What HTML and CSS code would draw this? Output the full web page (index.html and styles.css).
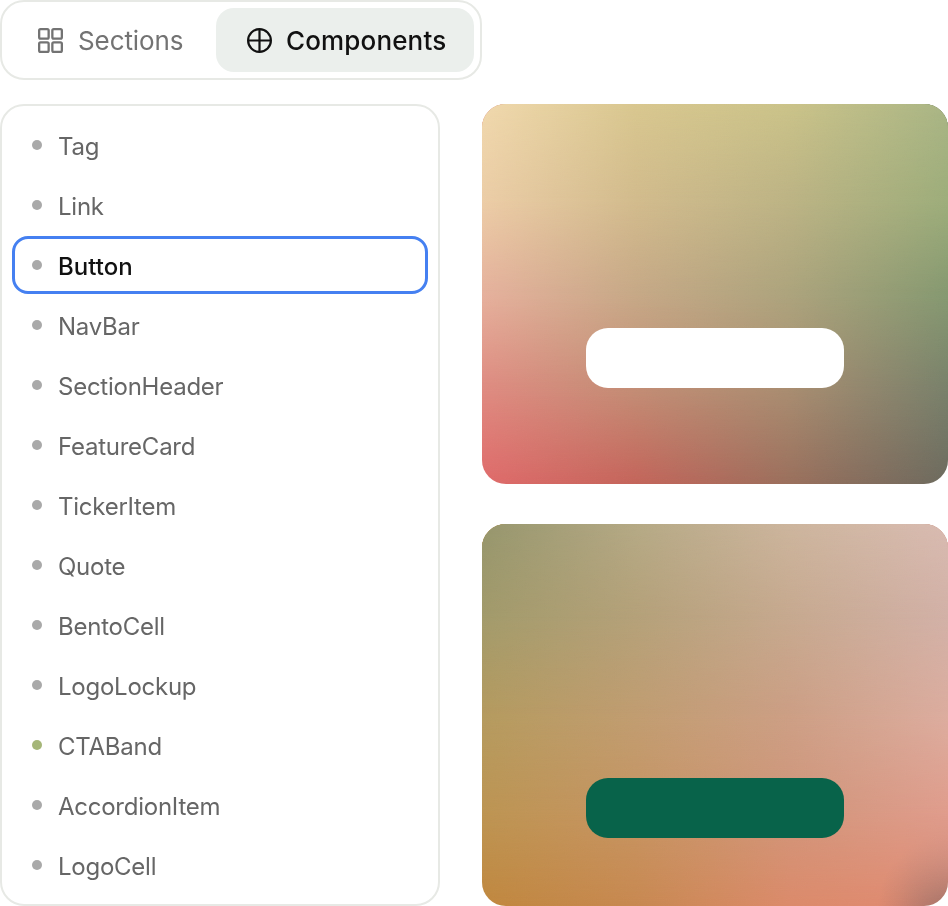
FILE: index.html
```html
<!DOCTYPE html>
<html lang="en">
<head>
<meta charset="utf-8">
<title>Components</title>
<link rel="stylesheet" href="styles.css">
</head>
<body>
<div class="page">
  <nav class="tabs">
    <button class="tab">
      <svg class="icon" viewBox="0 0 25 25" fill="none" stroke="currentColor" stroke-width="2.3"><rect x="1.15" y="1.15" width="9.5" height="9.5" rx="1.4"/><rect x="14.35" y="1.15" width="9.5" height="9.5" rx="1.4"/><rect x="1.15" y="14.35" width="9.5" height="9.5" rx="1.4"/><rect x="14.35" y="14.35" width="9.5" height="9.5" rx="1.4"/></svg>
      <span>Sections</span>
    </button>
    <button class="tab tab-active">
      <svg class="icon" viewBox="0 0 25 25" fill="none" stroke="currentColor" stroke-width="2.2"><circle cx="12.5" cy="12.5" r="11.4"/><path d="M12.5 1.1V23.9M1.1 12.5H23.9"/></svg>
      <span>Components</span>
    </button>
  </nav>
  <div class="main">
    <ul class="list">
      <li class="row"><i class="dot"></i><span class="label">Tag</span></li>
      <li class="row"><i class="dot"></i><span class="label">Link</span></li>
      <li class="row row-selected"><i class="dot"></i><span class="label">Button</span></li>
      <li class="row"><i class="dot"></i><span class="label">NavBar</span></li>
      <li class="row"><i class="dot"></i><span class="label">SectionHeader</span></li>
      <li class="row"><i class="dot"></i><span class="label">FeatureCard</span></li>
      <li class="row"><i class="dot"></i><span class="label">TickerItem</span></li>
      <li class="row"><i class="dot"></i><span class="label">Quote</span></li>
      <li class="row"><i class="dot"></i><span class="label">BentoCell</span></li>
      <li class="row"><i class="dot"></i><span class="label">LogoLockup</span></li>
      <li class="row"><i class="dot dot-green"></i><span class="label">CTABand</span></li>
      <li class="row"><i class="dot"></i><span class="label">AccordionItem</span></li>
      <li class="row"><i class="dot"></i><span class="label">LogoCell</span></li>
    </ul>
    <div class="previews">
      <section class="preview warm">
        <div class="band b4"></div><div class="band b3"></div><div class="band b2"></div><div class="band b1"></div>
        <svg class="grain" width="100%" height="100%"><filter id="grain-a"><feTurbulence type="fractalNoise" baseFrequency="0.9" numOctaves="2"/><feColorMatrix type="saturate" values="0"/></filter><rect width="100%" height="100%" filter="url(#grain-a)"/></svg>
        <div class="pill pill-white"></div>
      </section>
      <section class="preview earth">
        <div class="band b4"></div><div class="band b3"></div><div class="band b2"></div><div class="band b1"></div>
        <svg class="grain" width="100%" height="100%"><filter id="grain-b"><feTurbulence type="fractalNoise" baseFrequency="0.9" numOctaves="2"/><feColorMatrix type="saturate" values="0"/></filter><rect width="100%" height="100%" filter="url(#grain-b)"/></svg>
        <div class="pill pill-green"></div>
      </section>
    </div>
  </div>
</div>
</body>
</html>
```
FILE: styles.css
```css
* { box-sizing: border-box; }
html, body { margin: 0; padding: 0; background: #fff; }
body { font-family: Inter, "Liberation Sans", sans-serif; }
.page { display: flex; flex-direction: column; align-items: flex-start; gap: 24px; width: 948px; }

.tabs { display: flex; gap: 8px; width: 482px; height: 80px; padding: 6px; border: 2px solid #e7e9e5; border-radius: 24px; background: #fff; }
.tab { display: flex; align-items: center; gap: 15px; height: 64px; border: 0; border-radius: 18px; background: transparent; font: inherit; font-size: 26px; letter-spacing: -0.1px; color: #737373; padding: 0 0 0 30px; }
.tab span { padding-top: 1px; }
.tab:first-child { width: 200px; }
.tab-active { width: 258px; padding-left: 31px; background: #ebefec; color: #111; font-weight: 450; gap: 14px; letter-spacing: 0.15px; }
.icon { width: 25px; height: 25px; flex: none; }

.main { display: grid; grid-template-columns: 440px 466px; column-gap: 42px; width: 948px; }
.list { list-style: none; margin: 0; padding: 10px; height: 802px; border: 2px solid #e7e9e5; border-radius: 24px; display: flex; flex-direction: column; gap: 2px; }
.row { display: flex; align-items: center; gap: 16px; height: 58px; padding-left: 18px; border: 2px solid transparent; border-radius: 16px; font-size: 24px; letter-spacing: -0.25px; color: #666; }
.label { padding-top: 2px; }
.row-selected { border: 3px solid #4580f1; padding-left: 17px; color: #111; font-weight: 450; letter-spacing: 0; }
.dot { width: 10px; height: 10px; border-radius: 50%; background: #a9a9a9; flex: none; }
.dot-green { background: #a5b678; }

.previews { display: flex; flex-direction: column; gap: 40px; }
.preview { position: relative; overflow: hidden; border-radius: 24px; display: flex; align-items: flex-end; justify-content: center; }
.warm { height: 380px; padding-bottom: 96px; }
.earth { height: 382px; padding-bottom: 68px; }
.pill { position: relative; width: 258px; height: 60px; border-radius: 22px; }
.pill-white { background: #fff; }
.pill-green { background: #08634a; }
.grain { position: absolute; inset: 0; opacity: 0.08; mix-blend-mode: soft-light; }

.band { position: absolute; inset: 0; }
.b1 { -webkit-mask-image: linear-gradient(to bottom, #000 0, transparent 25%); mask-image: linear-gradient(to bottom, #000 0, transparent 25%); }
.b2 { -webkit-mask-image: linear-gradient(to bottom, #000 25%, transparent 50%); mask-image: linear-gradient(to bottom, #000 25%, transparent 50%); }
.b3 { -webkit-mask-image: linear-gradient(to bottom, #000 50%, transparent 75%); mask-image: linear-gradient(to bottom, #000 50%, transparent 75%); }
.b4 { -webkit-mask-image: linear-gradient(to bottom, #000 75%, transparent 100%); mask-image: linear-gradient(to bottom, #000 75%, transparent 100%); }

.warm { background: linear-gradient(to right, #e06a6a, #c4645a 33%, #9a6f5c 66%, #6c6a5e); }
.warm .b4 { background: linear-gradient(to right, #df8a80, #c28c74 33%, #a88c70 66%, #78806a); }
.warm .b3 { background: linear-gradient(to right, #e6b09c, #c6a886 33%, #aca37c 66%, #859870); }
.warm .b2 { background: linear-gradient(to right, #eccda6, #d2bb8c 33%, #bcb384 66%, #9dad7a); }
.warm .b1 { background: linear-gradient(to right, #f0d8ac, #d8c68e 33%, #cac288 66%, #a8b484); }

.earth { background: radial-gradient(circle at 100% 100%, #a87468 0, rgba(168, 116, 104, 0) 70px), linear-gradient(to right, #c0873e, #c88850 33%, #dc8a6a 66%, #e08a70 90%, #d08674); }
.earth .b4 { background: linear-gradient(to right, #bc9452, #c69462 33%, #d0957a 66%, #e09c8c); }
.earth .b3 { background: linear-gradient(to right, #b49a5e, #c09c70 33%, #cc9e84 66%, #dcac9e); }
.earth .b2 { background: linear-gradient(to right, #a29a6a, #b4a078 33%, #c6a88e 66%, #d2b0a6); }
.earth .b1 { background: linear-gradient(to right, #95956c, #b4a884 33%, #ccb49c 66%, #d8bab0); }
```
